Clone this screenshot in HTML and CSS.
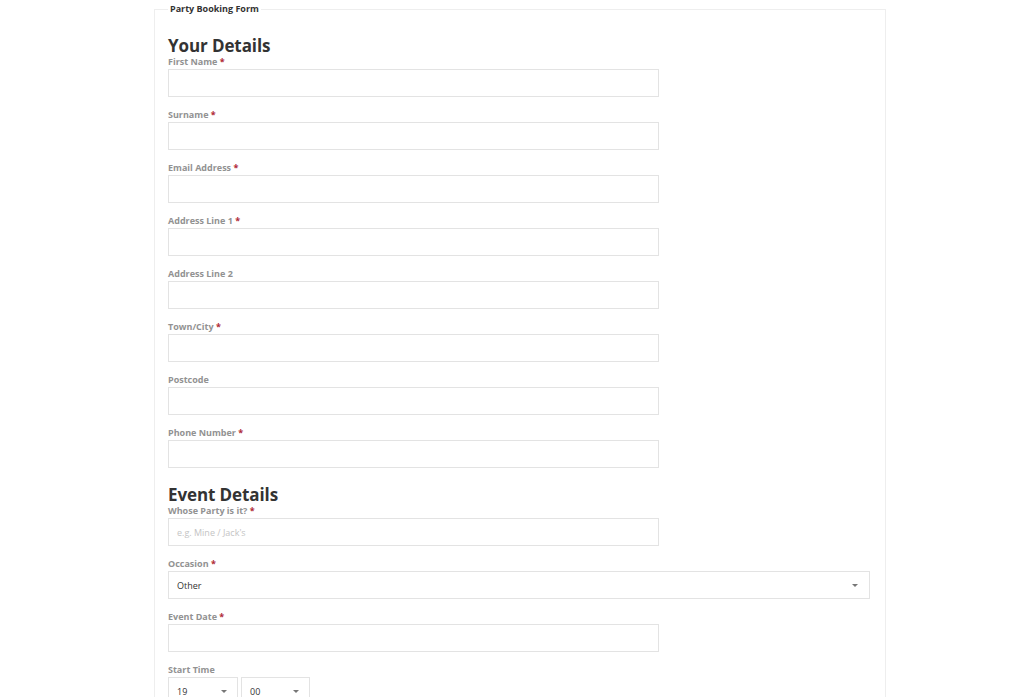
FILE: index.html
```html
<!DOCTYPE html>
<html>
<head>
<meta charset="utf-8">
<link rel="stylesheet" href="styles.css">
</head>
<body>
<form class="booking">
  <fieldset class="frame">
    <legend class="legend">Party Booking Form</legend>
    <h2 class="section first">Your Details</h2>
    <div class="field"><label class="lbl">First Name <span class="req">*</span></label><div class="input"></div></div>
    <div class="field"><label class="lbl">Surname <span class="req">*</span></label><div class="input"></div></div>
    <div class="field"><label class="lbl">Email Address <span class="req">*</span></label><div class="input"></div></div>
    <div class="field"><label class="lbl">Address Line 1 <span class="req">*</span></label><div class="input"></div></div>
    <div class="field"><label class="lbl">Address Line 2</label><div class="input"></div></div>
    <div class="field"><label class="lbl">Town/City <span class="req">*</span></label><div class="input"></div></div>
    <div class="field"><label class="lbl">Postcode</label><div class="input"></div></div>
    <div class="field"><label class="lbl">Phone Number <span class="req">*</span></label><div class="input"></div></div>
    <h2 class="section">Event Details</h2>
    <div class="field"><label class="lbl">Whose Party is it? <span class="req">*</span></label><div class="input"><span class="ph">e.g. Mine / Jack's</span></div></div>
    <div class="field"><label class="lbl">Occasion <span class="req">*</span></label><div class="input select wide"><span class="val">Other</span><span class="caret"></span></div></div>
    <div class="field"><label class="lbl">Event Date <span class="req">*</span></label><div class="input"></div></div>
    <div class="field"><label class="lbl">Start Time</label>
      <div class="times">
        <div class="input select time"><span class="val">19</span><span class="caret"></span></div>
        <div class="input select time"><span class="val">00</span><span class="caret"></span></div>
      </div>
    </div>
  </fieldset>
</form>
</body>
</html>
```
FILE: styles.css
```css
html, body {
  margin: 0;
  padding: 0;
  background: #fff;
  font-family: "Open Sans", "Noto Sans", sans-serif;
  color: #333;
}
.booking {
  padding-left: 154px;
  padding-top: 3px;
}
.frame {
  box-sizing: border-box;
  width: 731px;
  margin: 0;
  border: 1px solid #eeeeee;
  padding: 16px 15px 20px 13px;
}
.legend {
  font-size: 9px;
  font-weight: 700;
  color: #333;
  padding: 0 2px;
  margin-left: 0;
  line-height: 12px;
}
.section {
  margin: 17px 0 0;
  font-size: 17px;
  line-height: 20px;
  font-weight: 700;
  color: #333;
  letter-spacing: -0.1px;
}
.section.first {
  margin-top: 5px;
}
.field {
  margin-bottom: 12px;
}
.lbl {
  display: block;
  font-size: 9px;
  line-height: 12px;
  font-weight: 700;
  color: #929292;
  margin-bottom: 1px;
}
.req {
  color: #b02a37;
}
.input {
  box-sizing: border-box;
  width: 491px;
  height: 28px;
  border: 1px solid #e3e3e3;
  background: #fff;
  display: flex;
  align-items: center;
  padding: 0 8px;
  font-size: 9px;
}
.ph {
  color: #c4c4c4;
}
.val {
  color: #333;
  flex: 1;
}
.select.wide {
  width: 702px;
  padding-right: 11px;
}
.caret {
  width: 0;
  height: 0;
  border-left: 3px solid transparent;
  border-right: 3px solid transparent;
  border-top: 3px solid #777;
}
.times {
  display: flex;
  gap: 3px;
}
.select.time {
  width: 70px;
  padding-right: 10px;
}
.select.time + .select.time {
  width: 69px;
}
```
